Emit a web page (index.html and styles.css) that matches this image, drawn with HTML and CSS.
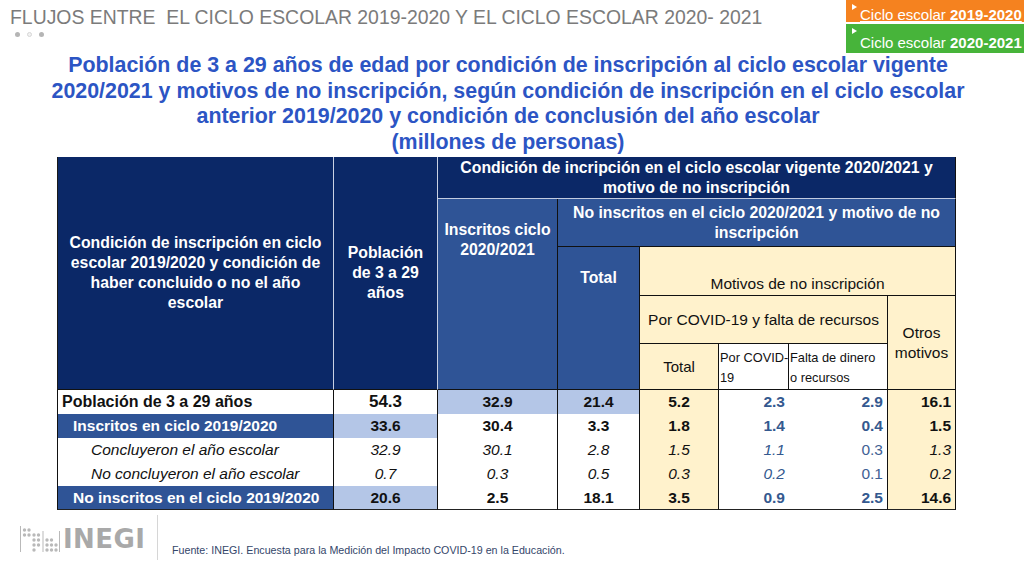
FILE: index.html
```html
<!DOCTYPE html>
<html lang="es">
<head>
<meta charset="utf-8">
<title>Flujos entre ciclos escolares</title>
<link rel="stylesheet" href="styles.css">
</head>
<body>
<header class="topbar">
  <div class="heading">
    <h1>FLUJOS ENTRE&nbsp; EL CICLO ESCOLAR 2019-2020 Y EL CICLO ESCOLAR 2020- 2021</h1>
    <div class="dots"><span></span><span class="light"></span><span></span></div>
  </div>
  <div class="badges">
    <a class="badge orange" href="#">Ciclo escolar <b>2019-2020</b></a>
    <div class="badge green">Ciclo escolar <b>2020-2021</b></div>
  </div>
</header>

<h2 class="title">Población de 3 a 29 años de edad por condición de inscripción al ciclo escolar vigente<br>2020/2021 y motivos de no inscripción, según condición de inscripción en el ciclo escolar<br>anterior 2019/2020 y condición de conclusión del año escolar<br>(millones de personas)</h2>

<table class="data">
  <colgroup>
    <col class="w1"><col class="w2"><col class="w3"><col class="w4"><col class="w5"><col class="w6"><col class="w7"><col class="w8">
  </colgroup>
  <thead>
    <tr class="ha">
      <th rowspan="5" class="dark first">Condición de inscripción en ciclo<br>escolar 2019/2020 y condición de<br>haber concluido o no el año<br>escolar</th>
      <th rowspan="5" class="dark second">Población<br>de 3 a 29<br>años</th>
      <th colspan="6" class="dark span-top">Condición de incripción en el ciclo escolar vigente 2020/2021 y<br>motivo de no inscripción</th>
    </tr>
    <tr class="hb">
      <th rowspan="4" class="mid at-top">Inscritos ciclo<br>2020/2021</th>
      <th colspan="5" class="mid span-mid">No inscritos en el ciclo 2020/2021 y motivo de no<br>inscripción</th>
    </tr>
    <tr class="hc">
      <th rowspan="3" class="mid at-top">Total</th>
      <th colspan="4" class="cream at-bottom">Motivos de no inscripción</th>
    </tr>
    <tr class="hd">
      <th colspan="3" class="cream">Por COVID-19 y falta de recursos</th>
      <th rowspan="2" class="cream">Otros<br>motivos</th>
    </tr>
    <tr class="he">
      <th class="cream total-sub">Total</th>
      <th class="plain">Por COVID-<br>19</th>
      <th class="plain">Falta de dinero<br>o recursos</th>
    </tr>
  </thead>
  <tbody>
    <tr class="r-total">
      <td class="label">Población de 3 a 29 años</td>
      <td class="num big">54.3</td>
      <td class="num lb">32.9</td>
      <td class="num lb">21.4</td>
      <td class="num cr">5.2</td>
      <td class="num bl rt nob">2.3</td>
      <td class="num bl rt">2.9</td>
      <td class="num cr rt">16.1</td>
    </tr>
    <tr class="r-group">
      <td class="label grp">Inscritos en ciclo 2019/2020</td>
      <td class="num lb">33.6</td>
      <td class="num">30.4</td>
      <td class="num">3.3</td>
      <td class="num cr">1.8</td>
      <td class="num bl rt nob">1.4</td>
      <td class="num bl rt">0.4</td>
      <td class="num cr rt">1.5</td>
    </tr>
    <tr class="r-sub">
      <td class="label sub">Concluyeron el año escolar</td>
      <td class="num">32.9</td>
      <td class="num">30.1</td>
      <td class="num">2.8</td>
      <td class="num cr">1.5</td>
      <td class="num bl rt nob">1.1</td>
      <td class="num bl rt upright">0.3</td>
      <td class="num cr rt">1.3</td>
    </tr>
    <tr class="r-sub">
      <td class="label sub">No concluyeron el año escolar</td>
      <td class="num">0.7</td>
      <td class="num">0.3</td>
      <td class="num">0.5</td>
      <td class="num cr">0.3</td>
      <td class="num bl rt nob">0.2</td>
      <td class="num bl rt upright">0.1</td>
      <td class="num cr rt">0.2</td>
    </tr>
    <tr class="r-group last">
      <td class="label grp">No inscritos en el ciclo 2019/2020</td>
      <td class="num lb">20.6</td>
      <td class="num">2.5</td>
      <td class="num">18.1</td>
      <td class="num cr">3.5</td>
      <td class="num bl rt nob">0.9</td>
      <td class="num bl rt">2.5</td>
      <td class="num cr rt">14.6</td>
    </tr>
  </tbody>
</table>

<footer class="footer">
  <div class="logo">
    <svg class="logo-mark" width="40" height="28" viewBox="0 0 40 28" aria-hidden="true">
      <g fill="#b9b9b9">
        <rect x="0" y="1" width="1" height="26"/>
        <circle cx="4.5" cy="5" r="1.7"/><circle cx="9" cy="5" r="1.7"/>
        <circle cx="4.5" cy="10" r="1.7"/><circle cx="9" cy="10" r="1.7"/>
        <circle cx="14" cy="10" r="1.7"/><circle cx="18.5" cy="10" r="1.7"/>
        <circle cx="14" cy="15" r="1.7"/><circle cx="18.5" cy="15" r="1.7"/>
        <circle cx="14" cy="20" r="1.7"/><circle cx="18.5" cy="20" r="1.7"/>
        <circle cx="14" cy="25" r="1.7"/>
        <rect x="22.5" y="6" width="1" height="21"/>
        <circle cx="27" cy="15" r="1.7"/><circle cx="31.5" cy="15" r="1.7"/>
        <circle cx="27" cy="20" r="1.7"/><circle cx="31.5" cy="20" r="1.7"/><circle cx="36" cy="20" r="1.7"/>
        <circle cx="27" cy="25" r="1.7"/><circle cx="31.5" cy="25" r="1.7"/><circle cx="36" cy="25" r="1.7"/>
        <rect x="39" y="6" width="1" height="21"/>
      </g>
    </svg>
    <span class="logo-text">INEGI</span>
  </div>
  <div class="sep"></div>
  <p class="source">Fuente: INEGI. Encuesta para la Medición del Impacto COVID-19 en la Educación.</p>
</footer>
</body>
</html>
```

FILE: styles.css
```css
* { box-sizing: border-box; }

body {
  margin: 0;
  width: 1024px;
  height: 562px;
  overflow: hidden;
  background: #ffffff;
  font-family: "Liberation Sans", Arial, sans-serif;
  color: #111111;
}

/* ---------- top bar ---------- */
.topbar {
  display: flex;
  justify-content: space-between;
  align-items: flex-start;
  height: 53px;
}

.heading { padding: 6px 0 0 10px; }

.heading h1 {
  margin: 0;
  font-size: 19.4px;
  line-height: 22px;
  font-weight: normal;
  color: #7b7b7b;
  white-space: nowrap;
}

.dots {
  display: flex;
  gap: 7px;
  margin: 4px 0 0 5px;
}

.dots span {
  width: 5px;
  height: 5px;
  border-radius: 50%;
  background: #b5b5b5;
}

.dots span.light {
  background: #f2f2f2;
  border: 1px solid #d6d6d6;
}

.badges {
  width: 178px;
  display: flex;
  flex-direction: column;
  gap: 2px;
}

.badge {
  position: relative;
  display: block;
  padding-left: 14px;
  color: #ffffff;
  font-size: 15px;
  line-height: 16px;
  white-space: nowrap;
}

.badge::before {
  content: "";
  position: absolute;
  left: 6px;
  top: 4px;
  border-left: 5px solid #ffffff;
  border-top: 3px solid transparent;
  border-bottom: 3px solid transparent;
}

.orange {
  height: 22px;
  padding-top: 6.5px;
  background: #f5821f;
  text-decoration: underline;
}

.green {
  height: 29px;
  padding-top: 11px;
  background: #47b43a;
}

/* ---------- title ---------- */
.title {
  margin: 0 0 2px 0;
  padding-right: 8px;
  text-align: center;
  font-size: 21.4px;
  line-height: 25.5px;
  font-weight: bold;
  color: #2c55c4;
}

/* ---------- table ---------- */
.data {
  margin-left: 57px;
  border-collapse: separate;
  border-spacing: 0;
  table-layout: fixed;
  width: 899px;
}

.w1 { width: 277px; }
.w2 { width: 104px; }
.w3 { width: 120px; }
.w4 { width: 82px; }
.w5 { width: 79px; }
.w6 { width: 70px; }
.w7 { width: 99px; }
.w8 { width: 68px; }

.ha { height: 42px; }
.hb { height: 48px; }
.hc { height: 49px; }
.hd { height: 48px; }
.he { height: 46px; }

.data th {
  padding: 0 2px;
  font-size: 15.8px;
  line-height: 20px;
  font-weight: bold;
  text-align: center;
  vertical-align: middle;
  color: #ffffff;
  white-space: nowrap;
}

.dark { background: #0b2867; }
.mid { background: #2f5496; }

.first {
  border-left: 1px solid #1a1a1a;
  border-right: 1px solid #c9d1e3;
  border-bottom: 1px solid #111111;
}

.second {
  border-right: 1px solid #c9d1e3;
  border-bottom: 1px solid #111111;
}

.span-top {
  border-bottom: 1px solid #c2cbe0;
  border-right: 1px solid #111111;
}

.span-mid {
  border-bottom: 1px solid #111111;
  border-right: 1px solid #111111;
}

.at-top {
  vertical-align: top !important;
  padding-top: 21px !important;
  border-right: 1px solid #111111;
  border-bottom: 1px solid #111111;
}

.data th.cream {
  background: #fff2cc;
  color: #111111;
  font-weight: normal;
  font-size: 15.5px;
  border-right: 1px solid #111111;
  border-bottom: 1px solid #111111;
}

.data th.at-bottom {
  vertical-align: bottom;
  padding-bottom: 1px;
}

.data th.total-sub { font-size: 15px; }

.data th.plain {
  background: #ffffff;
  color: #111111;
  font-weight: normal;
  font-size: 12.8px;
  text-align: left;
  vertical-align: bottom;
  padding: 0 0 1px 1px;
  border-right: 1px solid #111111;
  border-bottom: 1px solid #111111;
}

.data td {
  height: 24px;
  padding: 0 4px;
  font-size: 15.5px;
  line-height: 18px;
  white-space: nowrap;
  border-right: 1px solid #111111;
  background: #ffffff;
}

.data tr.last td { border-bottom: 1px solid #222222; }

.label {
  border-left: 1px solid #111111;
  text-align: left;
}

.r-total .label {
  font-weight: bold;
  font-size: 16px;
  padding-left: 4px;
}

.label.grp {
  background: #2f5496;
  color: #ffffff;
  font-weight: bold;
  padding-left: 15px;
}

.label.sub {
  font-style: italic;
  padding-left: 33px;
}

.num {
  text-align: center;
  font-weight: bold;
}

.r-sub .num {
  font-weight: normal;
  font-style: italic;
}

.big { font-size: 17px !important; }

.data td.lb { background: #b4c6e7; }
.data td.cr { background: #fff2cc; }

.bl { color: #34598f; }
.rt { text-align: right; padding-right: 3px; }
.data td.nob { border-right: none; }
.data td.upright { font-style: normal; color: #3f6194; }

/* ---------- footer ---------- */
.footer {
  display: flex;
  align-items: stretch;
  height: 52px;
  padding: 5px 0 0 0;
}

.logo {
  width: 157px;
  padding-left: 20px;
  display: flex;
  align-items: center;
  gap: 3px;
}

.logo-text {
  font-family: "DejaVu Sans", sans-serif;
  font-weight: bold;
  font-size: 26px;
  line-height: 1;
  letter-spacing: 0.4px;
  color: #a9a9a9;
}

.sep {
  width: 1px;
  height: 45px;
  background: #d6d6d6;
}

.source {
  align-self: flex-end;
  margin: 0 0 5px 14px;
  font-size: 10.7px;
  line-height: 13px;
  color: #34466a;
}
```
